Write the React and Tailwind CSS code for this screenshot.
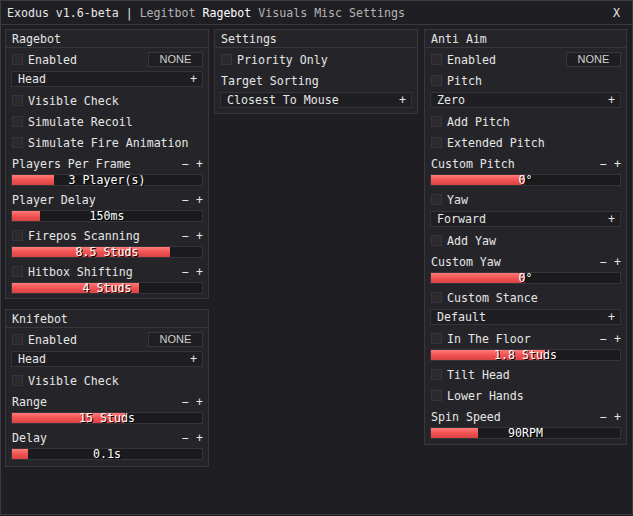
import React from "react";

function Box() {
  return <span className="ml-px w-[11px] h-[11px] shrink-0 bg-[#2a2a2f] border border-[#35353a]" />;
}

function CheckRow({ label, bind }) {
  return (
    <div className="h-[21px] flex items-center">
      <Box />
      <span className="ml-[5px] mt-[2px] flex-1">{label}</span>
      {bind && (
        <span className="w-[55px] h-[15px] flex items-center justify-center bg-[#1f1f23] border border-[#36363b] text-[#cfcfcf] text-[11px] font-['Liberation_Sans',sans-serif]">
          NONE
        </span>
      )}
    </div>
  );
}

function Dropdown({ value }) {
  return (
    <div className="h-[20px] pt-px">
      <div className="h-[16px] flex items-center justify-between pl-[6px] pr-[5px] bg-[#1f1f23] border border-[#34343a]">
        <span className="mt-px">{value}</span>
        <span className="mt-px">+</span>
      </div>
    </div>
  );
}

function Slider({ label, check, fill, text }) {
  return (
    <div className="h-[36px]">
      <div className="h-[21px] flex items-center">
        {check ? <Box /> : null}
        <span className={check ? "ml-[5px] mt-[2px] flex-1" : "ml-px mt-[2px] flex-1"}>{label}</span>
        <span className="whitespace-pre mt-[2px]">− +</span>
      </div>
      <div className="relative h-[12px] bg-[#1b1b1e] border border-[#34343a]">
        <div
          className="h-full bg-gradient-to-b from-[#ff7a7a] via-[#f25252] to-[#d94343]"
          style={{ width: fill + "px" }}
        />
        <div className="absolute inset-0 flex items-center justify-center leading-[10px] text-white [text-shadow:1px_1px_0_#000]">
          {text}
        </div>
      </div>
    </div>
  );
}

function Label({ text }) {
  return (
    <div className="h-[21px] flex items-center">
      <span className="ml-px mt-[2px]">{text}</span>
    </div>
  );
}

function Panel({ title, className, children }) {
  return (
    <div className={"flex flex-col bg-[#252529] border border-[#37373c] " + className}>
      <div className="h-[18px] shrink-0 flex items-center pl-[6px] border-b border-[#37373c]">
        <span className="mt-[2px]">{title}</span>
      </div>
      <div className="flex flex-col px-[5px] pt-px">{children}</div>
    </div>
  );
}

export default function App() {
  return (
    <div className="w-[633px] h-[516px] bg-[#1c1c1f] font-['DejaVu_Sans_Mono',monospace] text-[11.6px] text-[#e6e6e6]">
      <div className="w-[633px] h-[515px] bg-[#1f1f23] border border-[#3b3b40] flex flex-col">
        <div className="h-[24px] shrink-0 flex items-center justify-between pl-[6px] pr-[12px] border-b border-[#3b3b40]">
          <div className="whitespace-pre mt-[2px]">
            <span className="text-[#e6e6e6]">Exodus v1.6-beta | </span>
            <span className="text-[#b4b4b4]">Legitbot </span>
            <span className="text-white">Ragebot </span>
            <span className="text-[#b4b4b4]">Visuals Misc Settings</span>
          </div>
          <span className="text-[#e6e6e6] mt-[2px]">X</span>
        </div>
        <div className="flex items-start gap-[5px] pl-[4px] pt-[4px]">
          <div className="flex flex-col gap-[10px] w-[204px]">
            <Panel title="Ragebot" className="h-[270px]">
              <CheckRow label="Enabled" bind />
              <Dropdown value="Head" />
              <CheckRow label="Visible Check" />
              <CheckRow label="Simulate Recoil" />
              <CheckRow label="Simulate Fire Animation" />
              <Slider label="Players Per Frame" fill={42} text="3 Player(s)" />
              <Slider label="Player Delay" fill={28} text="150ms" />
              <Slider label="Firepos Scanning" check fill={158} text="8.5 Studs" />
              <Slider label="Hitbox Shifting" check fill={127} text="4 Studs" />
            </Panel>
            <Panel title="Knifebot" className="h-[158px]">
              <CheckRow label="Enabled" bind />
              <Dropdown value="Head" />
              <CheckRow label="Visible Check" />
              <Slider label="Range" fill={113} text="15 Studs" />
              <Slider label="Delay" fill={16} text="0.1s" />
            </Panel>
          </div>
          <div className="w-[204px]">
            <Panel title="Settings" className="h-[85px]">
              <CheckRow label="Priority Only" />
              <Label text="Target Sorting" />
              <Dropdown value="Closest To Mouse" />
            </Panel>
          </div>
          <div className="w-[203px] ml-px">
            <Panel title="Anti Aim" className="h-[416px]">
              <CheckRow label="Enabled" bind />
              <CheckRow label="Pitch" />
              <Dropdown value="Zero" />
              <CheckRow label="Add Pitch" />
              <CheckRow label="Extended Pitch" />
              <Slider label="Custom Pitch" fill={94} text="0°" />
              <CheckRow label="Yaw" />
              <Dropdown value="Forward" />
              <CheckRow label="Add Yaw" />
              <Slider label="Custom Yaw" fill={94} text="0°" />
              <CheckRow label="Custom Stance" />
              <Dropdown value="Default" />
              <Slider label="In The Floor" check fill={114} text="1.8 Studs" />
              <CheckRow label="Tilt Head" />
              <CheckRow label="Lower Hands" />
              <Slider label="Spin Speed" fill={47} text="90RPM" />
            </Panel>
          </div>
        </div>
      </div>
    </div>
  );
}
